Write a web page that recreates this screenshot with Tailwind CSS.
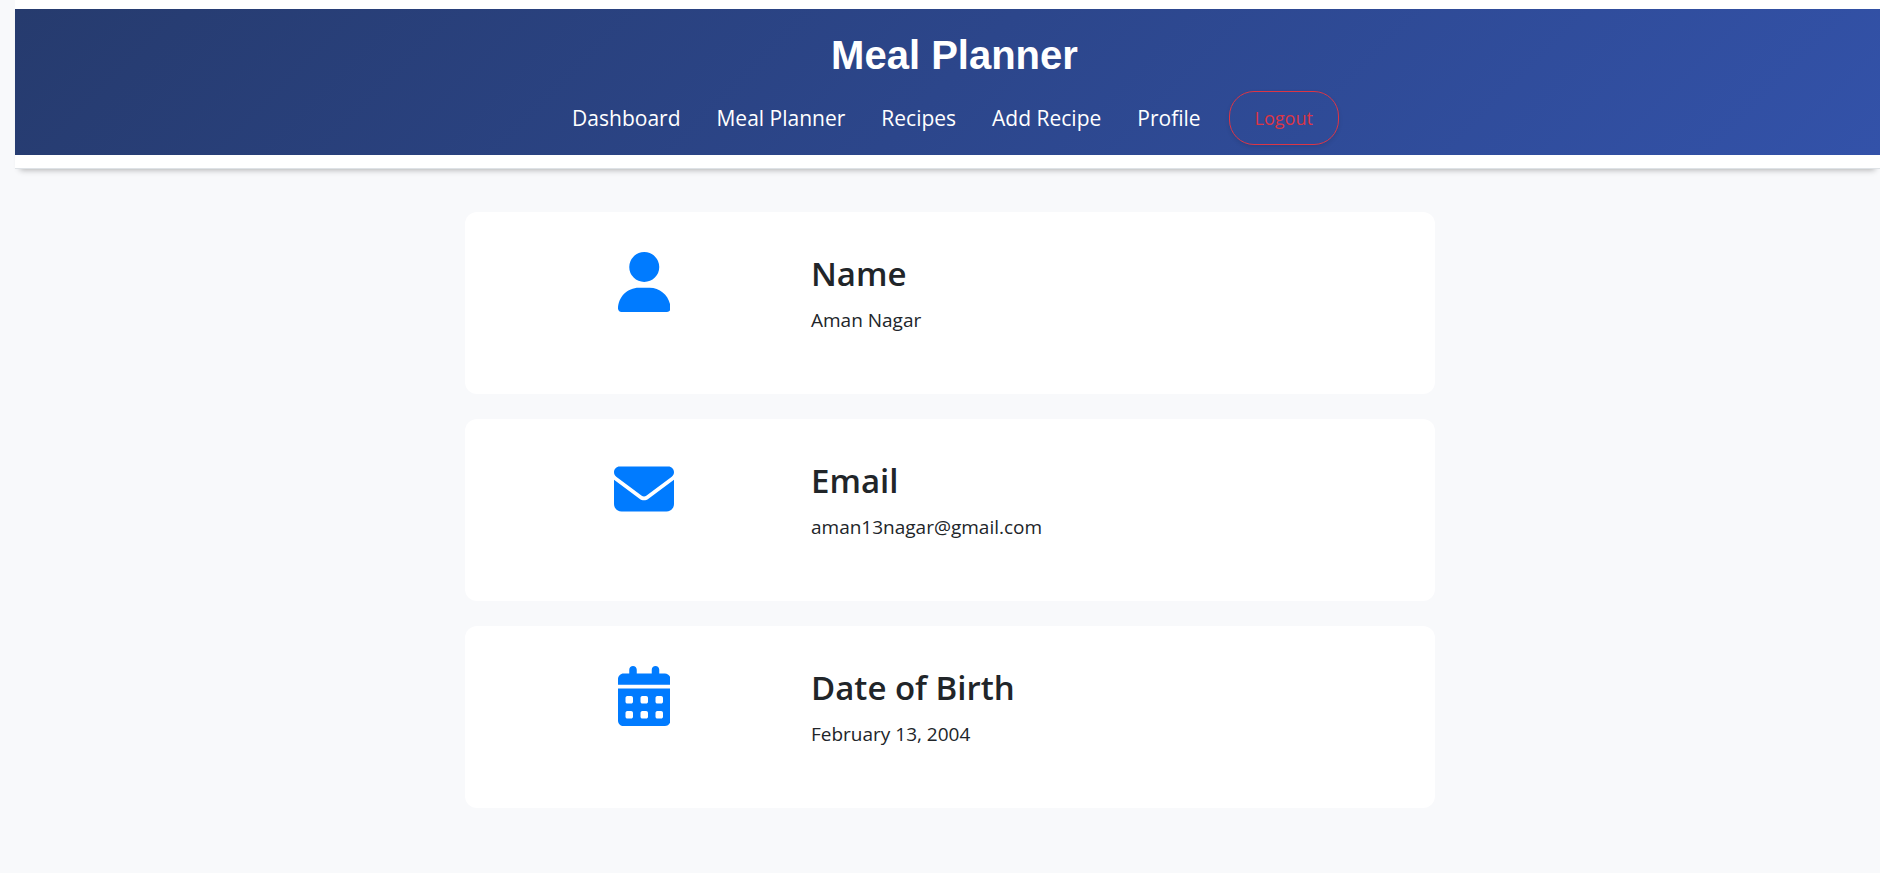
<!DOCTYPE html>
<html lang="en">
<head>
<meta charset="utf-8">
<meta name="viewport" content="width=device-width, initial-scale=1">
<title>Meal Planner</title>
<script src="https://cdn.jsdelivr.net/npm/@tailwindcss/browser@4"></script>
</head>
<body class="min-h-screen bg-[#f8f9fb] pb-16 font-['Open_Sans',sans-serif] text-[#212529]">
<header class="ml-[15px] border-b border-[#dee2e6] bg-white pt-[9px] pb-[13px] shadow-[0_6px_6px_-5px_rgba(0,0,0,0.3)]">
  <div class="flex flex-col items-center bg-linear-135 from-[#263b6e] from-0% via-[#2c468b] via-50% to-[#3352a9] to-100% pt-4 pb-[10px] pl-[14px] text-white">
    <h1 class="font-['Liberation_Sans',sans-serif] text-[40px] leading-[60px] font-bold">Meal Planner</h1>
    <nav class="mt-[6px] mr-4 flex flex-wrap items-center justify-center text-[21px]">
      <a href="#" class="px-[18px] pt-[2px]">Dashboard</a>
      <a href="#" class="px-[18px] pt-[2px]">Meal Planner</a>
      <a href="#" class="px-[18px] pt-[2px]">Recipes</a>
      <a href="#" class="px-[18px] pt-[2px]">Add Recipe</a>
      <a href="#" class="px-[18px] pt-[2px]">Profile</a>
      <button type="button" class="ml-[10px] h-[54px] rounded-[25px] border border-[#dc3545] px-[25px] text-[18px] text-[#dc3545] shadow-[0_2px_4px_rgba(0,0,0,0.1)]">Logout</button>
    </nav>
  </div>
</header>
<main class="mt-[43px] pl-5">
  <div class="mx-auto flex max-w-[970px] flex-col gap-[25px]">
  <section class="grid min-h-[182px] grid-cols-3 rounded-xl bg-white pt-10 pr-[6px] pl-[22px]">
    <div class="flex justify-center text-[#007bff]">
      <svg class="h-[60px]" viewBox="0 0 448 512" fill="currentColor" aria-hidden="true"><path d="M224 256A128 128 0 1 0 224 0a128 128 0 1 0 0 256zm-45.700 48C79.800 304 0 383.800 0 482.300C0 498.700 13.300 512 29.700 512H418.300c16.400 0 29.700-13.300 29.700-29.700C448 383.800 368.200 304 269.700 304H178.300z"/></svg>
    </div>
    <div class="col-span-2 pl-[10px]">
      <h2 class="text-[33px] leading-[44px] font-semibold">Name</h2>
      <p class="mt-[10px] text-[19px] leading-7">Aman Nagar</p>
    </div>
  </section>
  <section class="grid min-h-[182px] grid-cols-3 rounded-xl bg-white pt-10 pr-[6px] pl-[22px]">
    <div class="flex justify-center text-[#007bff]">
      <svg class="h-[60px]" viewBox="0 0 512 512" fill="currentColor" aria-hidden="true"><path d="M48 64C21.500 64 0 85.500 0 112c0 15.100 7.100 29.300 19.200 38.400L236.800 313.600c11.400 8.500 27 8.500 38.400 0L492.800 150.400c12.100-9.100 19.200-23.300 19.200-38.400c0-26.500-21.500-48-48-48H48zM0 176V384c0 35.300 28.700 64 64 64H448c35.300 0 64-28.700 64-64V176L294.400 339.200c-22.800 17.100-54 17.100-76.800 0L0 176z"/></svg>
    </div>
    <div class="col-span-2 pl-[10px]">
      <h2 class="text-[33px] leading-[44px] font-semibold">Email</h2>
      <p class="mt-[10px] text-[19px] leading-7">aman13nagar@gmail.com</p>
    </div>
  </section>
  <section class="grid min-h-[182px] grid-cols-3 rounded-xl bg-white pt-10 pr-[6px] pl-[22px]">
    <div class="flex justify-center text-[#007bff]">
      <svg class="h-[60px]" viewBox="0 0 448 512" fill="currentColor" aria-hidden="true"><path d="M128 0c17.700 0 32 14.300 32 32V64H288V32c0-17.700 14.300-32 32-32s32 14.300 32 32V64h48c26.500 0 48 21.500 48 48v48H0V112C0 85.500 21.500 64 48 64H96V32c0-17.700 14.300-32 32-32zM0 192H448V464c0 26.500-21.500 48-48 48H48c-26.500 0-48-21.500-48-48V192zm64 80v32c0 8.800 7.200 16 16 16h32c8.800 0 16-7.200 16-16V272c0-8.800-7.200-16-16-16H80c-8.800 0-16 7.200-16 16zm128 0v32c0 8.800 7.200 16 16 16h32c8.800 0 16-7.200 16-16V272c0-8.800-7.200-16-16-16H208c-8.800 0-16 7.200-16 16zm144-16c-8.800 0-16 7.200-16 16v32c0 8.800 7.200 16 16 16h32c8.800 0 16-7.200 16-16V272c0-8.800-7.200-16-16-16H336zM64 400v32c0 8.800 7.200 16 16 16h32c8.800 0 16-7.200 16-16V400c0-8.800-7.200-16-16-16H80c-8.800 0-16 7.200-16 16zm144-16c-8.800 0-16 7.200-16 16v32c0 8.800 7.200 16 16 16h32c8.800 0 16-7.200 16-16V400c0-8.800-7.200-16-16-16H208zm112 16v32c0 8.800 7.200 16 16 16h32c8.800 0 16-7.200 16-16V400c0-8.800-7.200-16-16-16H336c-8.800 0-16 7.200-16 16z"/></svg>
    </div>
    <div class="col-span-2 pl-[10px]">
      <h2 class="text-[33px] leading-[44px] font-semibold">Date of Birth</h2>
      <p class="mt-[10px] text-[19px] leading-7">February 13, 2004</p>
    </div>
  </section>
  </div>
</main>
</body>
</html>
